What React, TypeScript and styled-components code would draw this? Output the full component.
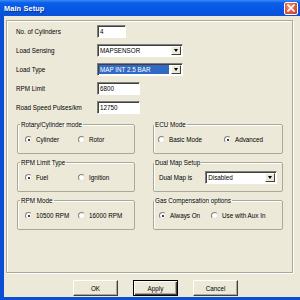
import React from 'react';
import styled, { createGlobalStyle } from 'styled-components';

const GlobalStyle = createGlobalStyle`
  html, body {
    margin: 0;
    padding: 0;
    background: #ece9d8;
  }
  * {
    box-sizing: border-box;
  }
`;

const FONT = `"Liberation Sans", Arial, sans-serif`;

const Window = styled.div`
  width: 300px;
  height: 300px;
  display: flex;
  flex-direction: column;
  overflow: hidden;
  font-family: ${FONT};
  font-size: 6.3px;
  color: #000;
`;

const TitleBar = styled.div`
  height: 16px;
  flex: none;
  display: flex;
  align-items: center;
  justify-content: space-between;
  padding: 0 2px 0 4px;
  background: linear-gradient(to bottom, #3a8cf6 0%, #0c5ee9 18%, #0656e4 60%, #0a51d6 100%);
`;

const Title = styled.span`
  color: #fff;
  font-weight: bold;
  font-size: 7.4px;
  letter-spacing: 0.1px;
  text-shadow: 1px 1px 0 #0a2c8a;
`;

const CloseButton = styled.div`
  width: 14px;
  height: 13px;
  border: 1px solid #fff;
  border-radius: 2px;
  background: radial-gradient(circle at 40% 35%, #f29a80 0%, #e0563a 55%, #c4391f 100%);
  display: flex;
  align-items: center;
  justify-content: center;
`;

const Body = styled.div`
  flex: 1;
  display: flex;
  flex-direction: column;
  background: #ece9d8;
  border-left: 4px solid #0b4fd6;
  border-bottom: 3px solid #0b4fd6;
  padding: 4px 0 0 2px;
`;

const Frame = styled.div`
  width: 287px;
  height: 253px;
  border: 1px solid #aca899;
  box-shadow: inset 1px 1px 0 #fff, 1px 1px 0 #fff;
  padding: 4px 0 0 9px;
`;

const FieldGrid = styled.div`
  display: grid;
  grid-template-columns: 81px auto;
  grid-auto-rows: 13px;
  row-gap: 6px;
  align-items: center;
`;

const Label = styled.span`
  white-space: nowrap;
`;

const TextBox = styled.div<{ w: number }>`
  width: ${p => p.w}px;
  height: 13px;
  background: #fff;
  border: 1px solid;
  border-color: #7f7f7f #fff #fff #7f7f7f;
  box-shadow: inset 1px 1px 0 #404040;
  padding: 0 0 0 2px;
  display: flex;
  align-items: center;
  white-space: nowrap;
`;

const Combo = styled(TextBox)`
  padding: 0 1px 0 1px;
  justify-content: space-between;
`;

const ComboText = styled.span<{ selected?: boolean }>`
  flex: 1;
  height: 9px;
  display: flex;
  align-items: center;
  padding-left: 1px;
  margin-right: 2px;
  background: ${p => (p.selected ? '#316ac5' : 'transparent')};
  color: ${p => (p.selected ? '#fff' : '#000')};
`;

const DropButton = styled.div`
  width: 10px;
  height: 9px;
  flex: none;
  background: #ece9d8;
  border: 1px solid;
  border-color: #fff #404040 #404040 #fff;
  display: flex;
  align-items: center;
  justify-content: center;
  &::after {
    content: '';
    border-left: 2.5px solid transparent;
    border-right: 2.5px solid transparent;
    border-top: 3px solid #000;
  }
`;

const GroupGrid = styled.div`
  display: grid;
  grid-template-columns: 118px 130px;
  grid-auto-rows: 33px;
  column-gap: 18px;
  row-gap: 5px;
  margin: 7px 0 0 1px;
`;

// legend sits at the fieldset's content edge, so pad sets where the caption starts
const Group = styled.fieldset<{ pad: number }>`
  margin: 0;
  padding: 0 0 0 ${p => p.pad}px;
  min-width: 0;
  border: 1px solid #aca899;
  box-shadow: inset 1px 1px 0 #fff;
  border-radius: 2px;
  display: flex;
  align-items: center;
`;

const Legend = styled.legend`
  padding: 0 1px;
  margin: 0;
  line-height: 7px;
  white-space: nowrap;
`;

const RadioRow = styled.div<{ col: number; indent: number }>`
  display: grid;
  grid-template-columns: ${p => p.col}px auto;
  align-items: center;
  margin: -2px 0 0 ${p => p.indent}px;
`;

const RadioItem = styled.label`
  display: flex;
  align-items: center;
  gap: 4px;
  white-space: nowrap;
`;

const RadioDot = styled.span<{ checked?: boolean }>`
  width: 7px;
  height: 7px;
  border-radius: 50%;
  background: #fff;
  border: 1px solid;
  border-color: #808080 #e6e3d4 #e6e3d4 #808080;
  display: flex;
  align-items: center;
  justify-content: center;
  &::after {
    content: '';
    width: 2px;
    height: 2px;
    border-radius: 50%;
    background: ${p => (p.checked ? '#000' : 'transparent')};
  }
`;

const DualRow = styled.div`
  display: flex;
  align-items: center;
  gap: 13px;
  margin: -2px 0 0 5px;
`;

const ButtonRow = styled.div`
  display: flex;
  gap: 15px;
  margin: 7px 0 0 67px;
`;

const Button = styled.div<{ isDefault?: boolean }>`
  width: 45px;
  height: 16px;
  display: flex;
  align-items: center;
  justify-content: center;
  background: #ece9d8;
  border: 1px solid;
  border-color: ${p => (p.isDefault ? '#000' : '#fff #404040 #404040 #fff')};
  box-shadow: ${p =>
    p.isDefault
      ? 'inset 1px 1px 0 #fff, inset -1px -1px 0 #404040, inset -2px -2px 0 #aca899'
      : 'inset -1px -1px 0 #aca899'};
`;

const Radio: React.FC<{ label: string; checked?: boolean }> = ({ label, checked }) => (
  <RadioItem>
    <RadioDot checked={checked} />
    {label}
  </RadioItem>
);

const App: React.FC = () => {
  return (
    <Window>
      <GlobalStyle />
      <TitleBar>
        <Title>Main Setup</Title>
        <CloseButton>
          <svg width="8" height="8" viewBox="0 0 8 8">
            <path d="M1 1 L7 7 M7 1 L1 7" stroke="#fff" strokeWidth="1.6" strokeLinecap="square" />
          </svg>
        </CloseButton>
      </TitleBar>
      <Body>
        <Frame>
          <FieldGrid>
            <Label>No. of Cylinders</Label>
            <TextBox w={29}>4</TextBox>
            <Label>Load Sensing</Label>
            <Combo w={86}>
              <ComboText>MAPSENSOR</ComboText>
              <DropButton />
            </Combo>
            <Label>Load Type</Label>
            <Combo w={86}>
              <ComboText selected>MAP INT 2.5 BAR</ComboText>
              <DropButton />
            </Combo>
            <Label>RPM Limit</Label>
            <TextBox w={43}>6800</TextBox>
            <Label>Road Speed Pulses/km</Label>
            <TextBox w={43}>12750</TextBox>
          </FieldGrid>

          <GroupGrid>
            <Group pad={2}>
              <Legend>Rotary/Cylinder mode</Legend>
              <RadioRow col={53} indent={5}>
                <Radio label="Cylinder" checked />
                <Radio label="Rotor" />
              </RadioRow>
            </Group>
            <Group pad={0}>
              <Legend>ECU Mode</Legend>
              <RadioRow col={66} indent={4}>
                <Radio label="Basic Mode" />
                <Radio label="Advanced" checked />
              </RadioRow>
            </Group>

            <Group pad={2}>
              <Legend>RPM Limit Type</Legend>
              <RadioRow col={53} indent={5}>
                <Radio label="Fuel" checked />
                <Radio label="Ignition" />
              </RadioRow>
            </Group>
            <Group pad={0}>
              <Legend>Dual Map Setup</Legend>
              <DualRow>
                <Label>Dual Map is</Label>
                <Combo w={72}>
                  <ComboText>Disabled</ComboText>
                  <DropButton />
                </Combo>
              </DualRow>
            </Group>

            <Group pad={2}>
              <Legend>RPM Mode</Legend>
              <RadioRow col={53} indent={5}>
                <Radio label="10500 RPM" checked />
                <Radio label="16000 RPM" />
              </RadioRow>
            </Group>
            <Group pad={0}>
              <Legend>Gas Compensation options</Legend>
              <RadioRow col={52} indent={5}>
                <Radio label="Always On" checked />
                <Radio label="Use with Aux In" />
              </RadioRow>
            </Group>
          </GroupGrid>
        </Frame>
        <ButtonRow>
          <Button>OK</Button>
          <Button isDefault>Apply</Button>
          <Button>Cancel</Button>
        </ButtonRow>
      </Body>
    </Window>
  );
};

export default App;
